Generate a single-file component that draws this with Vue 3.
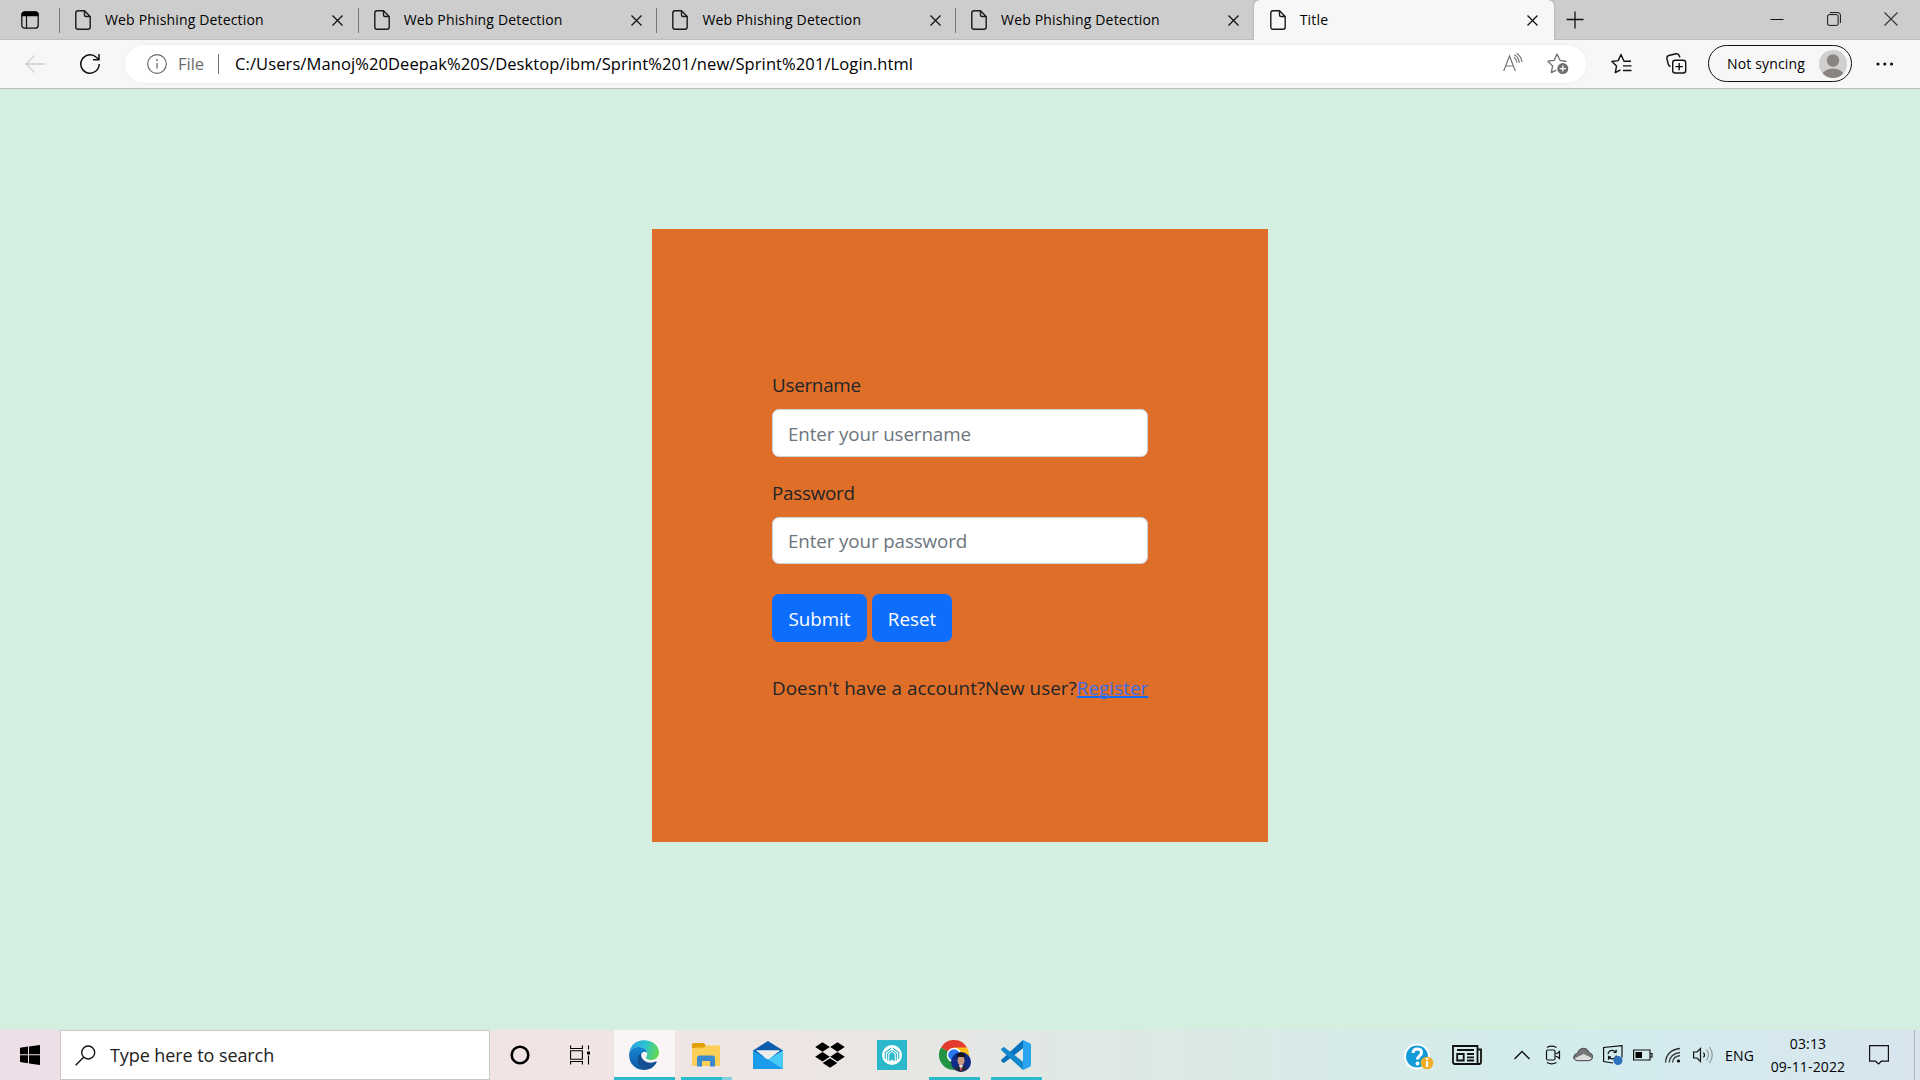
<script setup>
const tabs = [
  { title: 'Web Phishing Detection', active: false },
  { title: 'Web Phishing Detection', active: false },
  { title: 'Web Phishing Detection', active: false },
  { title: 'Web Phishing Detection', active: false },
  { title: 'Title', active: true },
]
</script>

<template>
  <div class="screen">
    <header class="tabstrip">
      <div class="tab-actions">
        <svg width="18" height="18" viewBox="0 0 18 18"><rect x=".8" y=".8" width="16.4" height="16.4" rx="3" fill="none" stroke="#111" stroke-width="1.3" /><path d="M.5 6V3.500Q.5.500 3.500.500h11Q17.500.500 17.500 3.500V5.200H.5z" fill="#000" /><path d="M5.500 5v12" stroke="#111" stroke-width="1.200" /></svg>
      </div>
      <div v-for="(tab, i) in tabs" :key="i" class="tab" :class="{ active: tab.active }">
        <svg class="doc" width="16" height="20" viewBox="0 0 16 20"><path d="M3 .8h6.500L15.200 6.500V17q0 2.200-2.200 2.200H3Q.8 19.200.8 17V3Q.8.8 3 .8zM9.500.8V5q0 1.500 1.500 1.500h4.200" fill="none" stroke="#1a1a1a" stroke-width="1.400" /></svg>
        <span class="tab-title">{{ tab.title }}</span>
        <svg class="x" width="11" height="11" viewBox="0 0 11 11"><path d="M.5.500l10 10M10.500.500l-10 10" stroke="#111" stroke-width="1.300" /></svg>
      </div>
      <svg class="plus" width="18" height="18" viewBox="0 0 18 18"><path d="M9 .5v17M.5 8.500h17" stroke="#111" stroke-width="1.300" /></svg>
      <div class="win">
        <svg width="14" height="14" viewBox="0 0 14 14"><path d="M.5 7.500h13" stroke="#111" stroke-width="1" /></svg>
        <svg width="14" height="14" viewBox="0 0 14 14"><rect x=".6" y="2.600" width="10.500" height="10.800" rx="1.500" fill="none" stroke="#111" /><path d="M3 .6h8q2.400 0 2.400 2.400v8" fill="none" stroke="#111" /></svg>
        <svg width="14" height="14" viewBox="0 0 14 14"><path d="M.5.500l13 13M13.500.500l-13 13" stroke="#333" stroke-width="1.100" /></svg>
      </div>
    </header>

    <nav class="toolbar">
      <svg class="back" width="20" height="18" viewBox="0 0 20 18"><path d="M20 9H1M9.500.500L1 9l8.500 8.500" fill="none" stroke="#cfcfcf" stroke-width="1.300" /></svg>
      <svg class="reload" width="22" height="22" viewBox="0 0 22 22"><path d="M20.200 11A9.200 9.200 0 1 1 17.300 4.300L20 6.500M20 1v5.700h-6" fill="none" stroke="#111" stroke-width="1.500" /></svg>
      <div class="address">
        <svg width="20" height="20" viewBox="0 0 20 20"><circle cx="10" cy="10" r="9.300" fill="none" stroke="#6b6b6b" stroke-width="1.200" /><path d="M10 9v5.500" stroke="#6b6b6b" stroke-width="1.300" /><circle cx="10" cy="6" r=".9" fill="#6b6b6b" /></svg>
        <span class="scheme">File</span>
        <i class="divider"></i>
        <span class="url">C:/Users/Manoj%20Deepak%20S/Desktop/ibm/Sprint%201/new/Sprint%201/Login.html</span>
        <svg class="read" width="20" height="20" viewBox="0 0 20 20"><path d="M.7 18L6.500 3l5.800 15M2.700 13h7.700M11 4.200q2.700 2 3 5.500M11.300 1.800q4.500 2.500 5 8M13.500.300q4.800 3 5.500 8.700" fill="none" stroke="#767676" stroke-width="1.200" /></svg>
        <svg class="star" width="22" height="22" viewBox="0 0 22 22"><path d="M19.500 8.500L13 7.300 10 1 7.200 7.300.9 8.200l4.700 4.700-1.300 6.700 5-2.400" fill="none" stroke="#6f6f6f" stroke-width="1.300" stroke-linejoin="round" /><circle cx="15.800" cy="15.600" r="5.500" fill="#6f6f6f" /><path d="M15.800 12.600v6M12.800 15.600h6" stroke="#fff" stroke-width="1.300" /></svg>
      </div>
      <svg class="fav" width="22" height="22" viewBox="0 0 22 22"><path d="M20 8.200h-7L10 1.500 7.200 7.600.9 8.500l4.600 4.600-1.200 6.500 5.200-2.800M12 12.900h8.500M12 17.500h8.500" fill="none" stroke="#111" stroke-width="1.400" stroke-linejoin="round" /></svg>
      <svg class="coll" width="21" height="21" viewBox="0 0 21 21"><rect x="6.700" y="7.200" width="13" height="12.800" rx="2.500" fill="none" stroke="#111" stroke-width="1.400" /><path d="M13.200 10v7.300M9.500 13.600h7.400M4.500 13.500Q2.700 13 2.200 11L.9 5.500Q.5 3.200 2.800 2.500L10 .8q2-.4 2.900 1.300L14 4.500" fill="none" stroke="#111" stroke-width="1.400" /></svg>
      <div class="profile">
        <span>Not syncing</span>
        <svg width="28" height="28" viewBox="0 0 28 28"><defs><clipPath id="face"><circle cx="14" cy="14" r="14" /></clipPath></defs><g clip-path="url(#face)"><path d="M0 0h28v28H0z" fill="#d2d0ce" /><circle cx="14" cy="10.500" r="6.200" fill="#8a8583" /><ellipse cx="14" cy="25" rx="10.500" ry="6.500" fill="#8a8583" /></g></svg>
      </div>
      <svg class="dots" width="18" height="4" viewBox="0 0 18 4"><g fill="#111"><circle cx="2" cy="2" r="1.600" /><circle cx="8.800" cy="2" r="1.600" /><circle cx="15.500" cy="2" r="1.600" /></g></svg>
    </nav>

    <main class="page">
      <form class="card" @submit.prevent>
        <label for="user">Username</label>
        <input id="user" type="text" placeholder="Enter your username" />
        <label for="pass" class="second">Password</label>
        <input id="pass" class="pass" type="password" placeholder="Enter your password" />
        <div class="buttons">
          <button type="submit" class="submit">Submit</button>
          <button type="reset" class="reset">Reset</button>
        </div>
        <p><span class="ask">Doesn't have a account?New user?</span><a href="#">Register</a></p>
      </form>
    </main>

    <footer class="taskbar">
      <div class="start">
        <svg width="20" height="20" viewBox="0 0 20 20"><path d="M0 2.800L8 1.600v7.700H0zM9 1.400L20 0v9.300H9zM0 10.300h8v7.900L0 17zM9 10.300h11V20L9 18.500z" /></svg>
      </div>
      <div class="search">
        <svg width="21" height="21" viewBox="0 0 21 21"><circle cx="13.200" cy="7.500" r="6.500" fill="none" stroke="#111" stroke-width="1.400" /><path d="M8.600 12.200L.6 20.200" stroke="#111" stroke-width="1.400" /></svg>
        <span>Type here to search</span>
      </div>
      <div class="cell narrow"><svg width="20" height="20" viewBox="0 0 20 20"><circle cx="10" cy="10" r="8.300" fill="none" stroke="#000" stroke-width="2.600" /></svg></div>
      <div class="cell narrow"><svg width="20" height="20" viewBox="0 0 20 20"><path d="M.6.500v3h11.800v-3M.6 19.500v-3h11.800v3M.6 5.700h11.800v8.600H.6zM18.500.500v4M18.500 10.500v9" fill="none" stroke="#000" stroke-width="1.100" /><path d="M17 6.500h3v3h-3z" /></svg></div>

      <div class="cell app edge"><svg width="30" height="30" viewBox="0 0 30 30">
        <defs>
          <linearGradient id="eg" x1="0" y1=".3" x2="1" y2=".5"><stop offset="0" stop-color="#249ddb" /><stop offset=".5" stop-color="#2bc3d2" /><stop offset="1" stop-color="#62d84e" /></linearGradient>
          <linearGradient id="eb" x1="0" y1="0" x2="0" y2="1"><stop offset="0" stop-color="#1686d4" /><stop offset="1" stop-color="#0c59a4" /></linearGradient>
        </defs>
        <path d="M.3 13C1.300 5 7 .2 15 .2c8.500 0 15 5.300 15 12.300 0 4.500-3.600 7.500-7.800 7.500-3.500 0-5.300-1-5.300-2.200 0-1 1.300-1.200 1.300-4C18.200 10 14 7 9.500 7 5 7 1.800 9.300.3 13z" fill="url(#eg)" />
        <path d="M.1 15C.3 10.500 4 7 9.300 7c4.500 0 8.200 2.200 8.800 5.800-3-2.300-6.200-.3-6.200 3.700 0 5.500 5 10 11 8.800-2.300 3-5.500 4.500-9 4.500C6.500 29.800 0 23.500.1 15z" fill="url(#eb)" />
        <path d="M11.900 13.200c-4.700 3-4.700 11 2.100 16.500 6 .6 11-2 13.700-7.500.4-.8-.3-1-1-.6-6.500 3.200-15-.500-14.800-8.400z" fill="#134f91" />
      </svg></div>
      <div class="cell app files"><svg width="28" height="24" viewBox="0 0 28 24">
        <path d="M1 0h11l2 3v3H0V1z" fill="#e3a008" /><path d="M0 5l12-.5 2-2h14V23H1L0 22z" fill="#fecf57" /><path d="M5 23.500V15q0-2.500 2.500-2.500h13Q23 12.500 23 15v8.500h-5V18h-8v5.500z" fill="#3a8ad0" />
      </svg></div>
      <div class="cell app"><svg width="30" height="28" viewBox="0 0 30 28">
        <path d="M0 9.500L15 0l15 9.500V16H0z" fill="#0b5cad" /><path d="M3 9.500h24L15 19z" fill="#f4f4f4" /><path d="M0 9.500l15 9 15-9V28H0z" fill="#1c9bea" /><path d="M30 9.500V28L15 18.500z" fill="#48c9f6" /><path d="M3 9.500h24l-12 8z" fill="#ececec" />
      </svg></div>
      <div class="cell app"><svg width="30" height="26" viewBox="0 0 30 26"><path d="M7.500.3l7.300 4.700-7.300 4.700L.2 5zM22.500.3L29.800 5l-7.300 4.700L15.200 5zM7.500 10l7.300 4.700-7.300 4.700-7.300-4.700zM22.500 10l7.300 4.700-7.300 4.700-7.300-4.700zM15 16.300l7.300 4.700-7.300 4.700L7.700 21z" /></svg></div>
      <div class="cell app"><svg width="30" height="30" viewBox="0 0 30 30">
        <path d="M0 0h30v30H0z" fill="#2cb8cb" /><circle cx="15" cy="15" r="10" fill="#fff" />
        <path d="M8.300 19v-6.500L14 8.300M21.700 19v-6.500L16 8.300M10.700 20.500v-6.800L14.500 10.500M19.300 20.500v-6.800L15.500 10.500" fill="none" stroke="#2cb8cb" stroke-width="1.100" /><path d="M12.300 21.500v-7.300L15 12l2.700 2.200v7.300L15 19.500z" fill="#2cb8cb" />
      </svg></div>
      <div class="cell app run"><svg class="chrome" width="32" height="32" viewBox="0 0 32 32">
        <path d="M15 15L2 7.500A15 15 0 0 1 28 7.500z" fill="#e33b2e" /><path d="M15 7.500h13A15 15 0 0 1 15 30z" fill="#fcc21b" /><path d="M15 15v15A15 15 0 0 1 2 7.500z" fill="#229342" /><circle cx="15" cy="15" r="7.300" fill="#fff" /><circle cx="15" cy="15" r="5.800" fill="#2a78ee" />
        <circle cx="22" cy="22" r="10" fill="#102a86" /><path d="M15.500 29.500l3-4h7l3 3.500Q22 34 15.500 29.500z" fill="#222b3e" /><path d="M20 25l2 6 2-6z" fill="#eee" /><ellipse cx="22" cy="20.500" rx="3.500" ry="5" fill="#c99a80" /><path d="M18 19.500Q17 12.500 22 12.500t4.200 7l-1-2.800q-3 .8-6.200-.2z" fill="#161318" /><path d="M21.500 27h1l.5 4h-2z" fill="#a33" />
      </svg></div>
      <div class="cell app run"><svg width="30" height="30" viewBox="0 0 30 30">
        <path d="M22 0v8.300L3.700 22.500q-1 .8-1.900.1L.4 21.200q-.8-1 .2-1.800z" fill="#0873bd" /><path d="M22 30v-8.300L3.700 7.500q-1-.8-1.900-.1L.4 8.800q-.8 1 .2 1.800z" fill="#1388cf" /><path d="M22 0l6.500 3Q30 3.700 30 5v20q0 1.300-1.500 2L22 30z" fill="#2aa3f0" />
      </svg></div>

      <div class="tray">
        <svg class="help" width="30" height="28" viewBox="0 0 30 28"><circle cx="13" cy="13.500" r="13" fill="#fff" /><circle cx="13" cy="13.500" r="11" fill="#129bd7" /><path d="M9 10q.3-4 4.300-4 4.200 0 4.200 3.600 0 2.200-2.200 3.600-1.800 1.200-1.800 3.300" fill="none" stroke="#fff" stroke-width="3" /><circle cx="13.500" cy="20.500" r="1.900" fill="#fff" /><circle cx="23" cy="20" r="6.300" fill="#f3ae23" /><path d="M22 18h2.200v6H22z" fill="#fff" /><circle cx="23" cy="15.900" r="1.200" fill="#fff" /></svg>
        <svg class="news" width="30" height="20" viewBox="0 0 30 20"><path d="M1 1h24.500v16.500q0 1.500 1.500 1.500H3q-2 0-2-2zM25.500 4.500H29V17q0 2-2 2M5 5h17M15 9h7M15 12.300h7M15 15.500h7" fill="none" stroke="#111" stroke-width="1.800" /><path d="M5.200 9h6.500v6.500H5.200z" fill="none" stroke="#111" stroke-width="1.800" /></svg>
        <div class="icons">
          <svg viewBox="0 0 20 20"><path d="M1.500 14L9 6.500l7.500 7.500" fill="none" stroke="#111" stroke-width="1.400" /></svg>
          <svg viewBox="0 0 20 20"><g fill="none" stroke="#111" stroke-width="1.200"><rect x="3.500" y="5" width="8.500" height="10" rx="1.500" /><path d="M12.500 8.500h1.500l2.500-2v7l-2.500-2h-1.500M4 2.500q4.500-2.700 9.500 0M4 17.500q4.500 2.700 9.500 0" /></g></svg>
          <svg viewBox="-.5 0 20 20"><path d="M4 15.700Q-.5 15 .3 11.500 1 8.500 4 8.500 5 3.500 10 3.300q4 0 5.500 4.200Q19 8.500 19.200 11.500q0 4-4 4.200z" fill="#777" /><path d="M4 15.700q-3-.7-3-2.200l9-4.500 8.500 4q-.8 2.700-3.500 2.700z" fill="#dcdcdc" /><path d="M4 15.700Q-.5 15 .3 11.500 1 8.500 4 8.500 5 3.500 10 3.300q4 0 5.500 4.200Q19 8.500 19.200 11.500q0 4-4 4.200z" fill="none" stroke="#444" /></svg>
          <svg viewBox="0 0 20 20"><g fill="none" stroke="#111" stroke-width="1.200"><path d="M10 18L.6 16.500v-14L19 .6v12" /><path d="M5 9q.7-3.700 4.500-3.700 2.500 0 3.700 2.200V4.800M13.200 7.500H10.500M13.500 10.500q-1 3.300-4.200 3.300-2.400 0-3.800-2v3M5.500 11.800H8" /></g><circle cx="15" cy="15.500" r="4.500" fill="#2e6fbe" /></svg>
          <svg viewBox="0 0 20 20"><path d="M.6 5H17v10H.6zM17.500 8.500h1.500v3.500h-1.500" fill="none" stroke="#111" stroke-width="1.200" /><path d="M2.500 7H9V13H2.500z" /></svg>
          <svg viewBox="0 0 20 20"><g fill="none" stroke-width="1.300"><path d="M2.500 17.500Q3.500 5 17 3.500M6 17.500Q7 9 17 7.500" stroke="#333" /><path d="M9.500 17.500q.5-6 7.500-6.800" stroke="#333" /></g><circle cx="15.500" cy="16" r="1.600" /></svg>
          <svg viewBox="0 0 20 20"><path d="M.6 7H4l3.500-3.500v13L4 13H.6zM10.500 7.500q2 2.500 0 5" fill="none" stroke="#111" stroke-width="1.200" /><path d="M13.500 4.500q4 5.500 0 11M16.500 2q5.500 8 0 16" fill="none" stroke="#8c989b" stroke-width="1.200" /></svg>
        </div>
        <span class="lang">ENG</span>
        <div class="clock"><span class="time">03:13</span><span class="date">09-11-2022</span></div>
        <svg class="note" width="20" height="20" viewBox="0 0 20 20"><path d="M.6.600h18.800v15.600h-7L9.500 19l-2.900-2.800h-6z" fill="none" stroke="#111" stroke-width="1.200" /></svg>
        <i class="peek"></i>
      </div>
    </footer>
  </div>
</template>

<style>
body { margin: 0; overflow: hidden; }
</style>

<style scoped>
* { box-sizing: border-box; }
.screen { width: 1920px; height: 1080px; display: flex; flex-direction: column; overflow: hidden; font-family: "Open Sans", "Noto Sans", sans-serif; color: #000; }
svg { display: block; flex: none; }
span { white-space: nowrap; }

.tabstrip { height: 40px; flex: none; display: flex; background: #cdcdcd; box-shadow: inset 0 -1px #bdbdbd; }
.tab-actions { width: 59px; padding: 11px 0 0 21px; }
.tab { position: relative; width: 298.700px; height: 40px; display: flex; align-items: center; padding: 0 14.500px 0 16px; font-size: 14px; letter-spacing: .16px; }
.tab::before { content: ""; position: absolute; left: 0; top: 8px; width: 1px; height: 25px; background: #777; }
.tab.active { width: 300px; padding-right: 16px; background: #f7f7f7; border-radius: 6px 6px 0 0; box-shadow: 0 -1px 3px #0003; }
.tab.active::before { display: none; }
.tab-title { flex: 1; margin-left: 14px; line-height: 38px; }
.tab .x { margin-top: 1px; }
.plus { margin: 11px 0 0 12.500px; }
.win { margin-left: auto; display: flex; gap: 43px; padding: 12px 22px 0 0; }

.toolbar { position: relative; height: 49px; flex: none; display: flex; align-items: center; background: #f7f7f7; border-bottom: 1px solid #bcbcbc; }
.back { margin-left: 25px; margin-top: -1px; }
.reload { margin-left: 34px; }
.address { width: 1461px; height: 38px; margin-left: 24px; padding: 0 17px 0 22px; display: flex; align-items: center; background: #fff; border-radius: 19px; box-shadow: 0 0 4px #0000000d; font-size: 16.500px; }
.scheme { margin-left: 11px; margin-top: -2px; width: 28px; color: #6b6b6b; }
.divider { width: 1px; height: 20px; margin-left: 12px; background: #777; }
.url { margin-left: 16px; margin-top: -2px; flex: 1; letter-spacing: .1px; }
.read { margin-right: 24px; margin-top: -2px; }
.fav { margin-left: 24.500px; margin-top: -1px; }
.coll { margin-left: 33px; margin-top: -1px; }
.profile { width: 144px; height: 37px; margin-left: 21.500px; margin-top: -1px; padding: 0 4px 0 18px; display: flex; align-items: center; justify-content: space-between; border: 1.500px solid #111; border-radius: 19px; font-size: 14px; letter-spacing: .15px; }
.profile span { margin-top: -1px; }
.dots { margin-left: 24px; margin-top: -1px; }

.page { flex: 1; padding-top: 140px; display: flex; justify-content: center; align-items: flex-start; background: #d4eedf; }
.card { width: 616px; height: 613px; padding: 141px 120px 0; background: #df6e28; font-size: 18.800px; color: #212529; display: flex; flex-direction: column; }
label { height: 30px; line-height: 30px; margin-bottom: 9px; letter-spacing: -.25px; }
label.second { margin-top: 21px; }
input { width: 376px; height: 48px; padding: 1px 15px 0; border: 1px solid #ced4da; border-radius: 7px; background: #fff; font: inherit; letter-spacing: -.12px; }
input.pass { height: 47px; padding-top: 0; }
input::placeholder { color: #6c757d; opacity: 1; }
.buttons { display: flex; gap: 5px; margin-top: 30px; }
button { height: 48px; padding: 1px 0 0; border: 0; border-radius: 7px; background: #0d6efd; color: #fff; font: inherit; }
.submit { width: 95px; }
.reset { width: 80px; }
p { margin: 31px 0 0; line-height: 30px; white-space: nowrap; letter-spacing: .08px; }
a { color: #3a6ee8; text-decoration: underline #0d6efd; text-decoration-thickness: 2px; text-decoration-skip-ink: none; }

.taskbar { height: 50px; flex: none; display: flex; background: linear-gradient(90deg, #eedee7 0, #f2e3e5 500px, #ece6e3 820px, #e0e8e4 1060px, #d7ebe8 1340px, #d3ecee 1600px, #d8e5ee 1920px); }
.start { width: 60px; padding: 15px 20px; }
.search { width: 430px; height: 50px; border: 1px solid #c9c9cb; background: #fff; display: flex; align-items: center; padding-left: 14px; font-size: 18px; letter-spacing: -.08px; color: #222; }
.search span { margin-left: 14px; }
.cell { position: relative; width: 62px; display: flex; align-items: center; justify-content: center; }
.cell.narrow { width: 60px; }
.narrow + .app { margin-left: 3px; }
.edge { background: linear-gradient(#f9f5f5, #f9f5f5) 1px 0 / 61px 50px no-repeat; }
.edge::after, .run::after, .files::after { content: ""; position: absolute; bottom: 0; left: 6px; width: 51px; height: 3px; background: #2bb9cc; }
.edge::after { left: 1px; width: 61px; }
.files::after { background: linear-gradient(90deg, #2bb9cc 41px, #80d2dc 41px); }
.chrome { margin: 2px 0 0 2px; }
.tray { margin-left: auto; width: 516px; display: flex; align-items: center; }
.news { margin-left: 18px; }
.help { margin-top: 3px; }
.icons { display: flex; gap: 10px; margin-left: 31px; }
.icons svg { width: 20px; height: 20px; }
.lang { margin-left: 12px; width: 30px; font-size: 14px; letter-spacing: .2px; }
.clock { width: 78px; margin-left: 14px; display: flex; flex-direction: column; align-items: center; font-size: 14px; line-height: 23px; letter-spacing: .15px; }
.note { margin-left: 21.500px; }
.peek { width: 1px; height: 50px; margin-left: auto; margin-right: 5px; background: #a8b8c2; }
</style>
